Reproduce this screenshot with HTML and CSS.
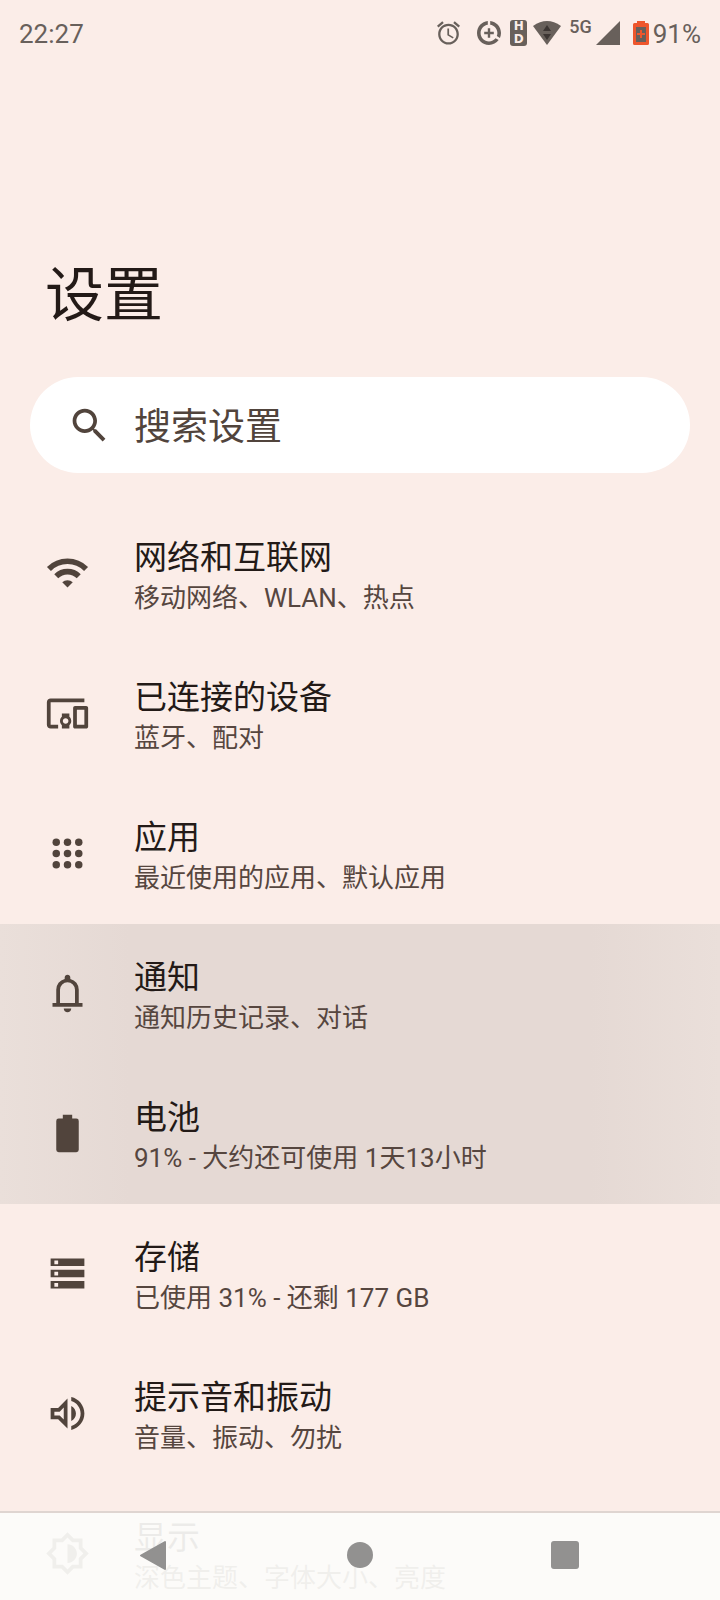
FILE: index.html
```html
<!DOCTYPE html>
<html lang="zh-CN">
<head>
<meta charset="utf-8">
<meta name="viewport" content="width=device-width, initial-scale=1">
<title>设置</title>
<link rel="stylesheet" href="styles.css">
</head>
<body>
<div class="screen">
  <header class="status">
    <time class="clock">22:27</time>
    <div class="indicators">
      <svg class="alarm" viewBox="2 2 20 20" aria-hidden="true"><path d="M22 5.72l-4.6-3.86-1.29 1.53 4.6 3.86L22 5.72zM7.88 3.39L6.6 1.86 2 5.71l1.29 1.53 4.59-3.85zM12.5 8H11v6l4.75 2.85.75-1.23-4-2.37V8zM12 4c-4.97 0-9 4.03-9 9s4.02 9 9 9c4.97 0 9-4.03 9-9s-4.03-9-9-9zm0 16c-3.87 0-7-3.13-7-7s3.13-7 7-7 7 3.13 7 7-3.13 7-7 7z"/></svg>
      <svg class="saver" viewBox="2 2 20 20" aria-hidden="true"><path d="M11 8v3H8v2h3v3h2v-3h3v-2h-3V8h-2zm2-5.95v3.03c3.39.49 6 3.39 6 6.92 0 .9-.18 1.75-.48 2.54l2.6 1.53c.56-1.24.88-2.62.88-4.07 0-5.18-3.95-9.45-9-9.95zM12 19c-3.87 0-7-3.13-7-7 0-3.53 2.61-6.43 6-6.92V2.05c-5.06.5-9 4.76-9 9.95 0 5.52 4.47 10 9.99 10 3.31 0 6.24-1.61 8.06-4.09l-2.6-1.53C16.17 17.98 14.21 19 12 19z"/></svg>
      <span class="hd"><span>H</span><span>D</span></span>
      <svg class="wifi" viewBox="0 0 28 24" aria-hidden="true"><path d="M14 24L0 5Q14-5 28 5z"/><path class="arrows" d="M14 4l4 6H10zM14 19l4-6H10z"/></svg>
      <span class="network">5G</span>
      <svg class="signal" viewBox="0 0 24 24" aria-hidden="true"><path d="M24 0v24H0z"/></svg>
      <svg class="charge" viewBox="0 0 16 24" aria-hidden="true"><path class="shell" d="M4 0h8v2h2.500q1.500 0 1.500 1.500v19q0 1.500-1.500 1.500h-13Q0 24 0 22.500v-19Q0 2 1.500 2H4z"/><path d="M3 6h10v15H3z"/><path class="shell" d="M7 9h2v3h3v2H9v3H7v-3H4v-2h3z"/></svg>
      <span class="percent">91%</span>
    </div>
  </header>

  <main>
    <h1 class="heading">设置</h1>
    <label class="search">
      <svg class="icon" viewBox="0 0 24 24" aria-hidden="true"><path d="M15.500 14h-.79l-.28-.27C15.410 12.590 16 11.110 16 9.500 16 5.910 13.090 3 9.500 3S3 5.910 3 9.500 5.910 16 9.500 16c1.610 0 3.090-.59 4.230-1.570l.27.28v.79l5 4.990L20.490 19l-4.990-5zm-6 0C7.010 14 5 11.990 5 9.500S7.010 5 9.500 5 14 7.010 14 9.500 11.990 14 9.500 14z"/></svg>
      <input class="search-field" type="text" placeholder="搜索设置" aria-label="搜索设置">
    </label>

    <nav class="list" aria-label="设置">
      <a class="row" href="#network">
        <svg class="icon" viewBox="0 0 24 24" aria-hidden="true"><path class="arc" d="M2.100 9.600A14 14 0 0 1 21.900 9.600M6 13.500A8.500 8.500 0 0 1 18 13.500"/><path d="M12 19.500L9.200 16.700A4 4 0 0 1 14.800 16.700z"/></svg>
        <span class="text"><span class="title">网络和互联网</span><span class="summary">移动网络、WLAN、热点</span></span>
      </a>
      <a class="row" href="#devices">
        <svg class="icon" viewBox="0 0 24 24" aria-hidden="true"><path d="M3 6h18V4H3c-1.100 0-2 .9-2 2v12c0 1.100.9 2 2 2h4v-2H3V6zm10 6H9v1.780c-.61.55-1 1.330-1 2.220s.39 1.670 1 2.220V20h4v-1.780c.61-.55 1-1.340 1-2.220s-.39-1.670-1-2.220V12zm-2 5.500c-.83 0-1.500-.67-1.500-1.500s.67-1.500 1.500-1.500 1.500.67 1.500 1.500-.67 1.500-1.500 1.500zM22 8h-6c-.5 0-1 .5-1 1v10c0 .5.5 1 1 1h6c.5 0 1-.5 1-1V9c0-.5-.5-1-1-1zm-1 10h-4v-8h4v8z"/></svg>
        <span class="text"><span class="title">已连接的设备</span><span class="summary">蓝牙、配对</span></span>
      </a>
      <a class="row" href="#apps">
        <svg class="icon" viewBox="0 0 24 24" aria-hidden="true"><circle cx="6" cy="6" r="2"/><circle cx="12" cy="6" r="2"/><circle cx="18" cy="6" r="2"/><circle cx="6" cy="12" r="2"/><circle cx="12" cy="12" r="2"/><circle cx="18" cy="12" r="2"/><circle cx="6" cy="18" r="2"/><circle cx="12" cy="18" r="2"/><circle cx="18" cy="18" r="2"/></svg>
        <span class="text"><span class="title">应用</span><span class="summary">最近使用的应用、默认应用</span></span>
      </a>
      <a class="row pressed" href="#notifications">
        <svg class="icon" viewBox="0 0 24 24" aria-hidden="true"><path d="M4 19v-2h2v-7q0-2.075 1.250-3.688T10.500 4.200v-.7q0-.625.438-1.062T12 2t1.063.438T13.500 3.500v.7q2 .5 3.250 2.112T18 10v7h2v2zm8 3q-.825 0-1.412-.587T10 20h4q0 .825-.587 1.413T12 22m-4-5h8v-7q0-1.650-1.175-2.825T12 6 9.175 7.175 8 10z"/></svg>
        <span class="text"><span class="title">通知</span><span class="summary">通知历史记录、对话</span></span>
      </a>
      <a class="row pressed" href="#battery">
        <svg class="icon" viewBox="0 0 24 24" aria-hidden="true"><path d="M9.500 2h5v2h2.200q1.300 0 1.300 1.300v15.400q0 1.300-1.300 1.300H7.300Q6 22 6 20.700V5.300Q6 4 7.300 4h2.200z"/></svg>
        <span class="text"><span class="title">电池</span><span class="summary">91% - 大约还可使用 1天13小时</span></span>
      </a>
      <a class="row" href="#storage">
        <svg class="icon" viewBox="0 0 24 24" aria-hidden="true"><path fill-rule="evenodd" d="M3 4h18v4H3zM5 5v2h2V5zM3 10h18v4H3zM5 11v2h2v-2zM3 16h18v4H3zM5 17v2h2v-2z"/></svg>
        <span class="text"><span class="title">存储</span><span class="summary">已使用 31% - 还剩 177 GB</span></span>
      </a>
      <a class="row" href="#sound">
        <svg class="icon" viewBox="0 0 24 24" aria-hidden="true"><path d="M3 9v6h4l5 5V4L7 9H3zm7-.17v6.340L7.830 13H5v-2h2.830L10 8.830zM16.500 12c0-1.770-1.020-3.290-2.500-4.030v8.050c1.480-.73 2.500-2.250 2.500-4.020zM14 3.230v2.060c2.890.86 5 3.540 5 6.710s-2.110 5.850-5 6.710v2.060c4.010-.91 7-4.490 7-8.770 0-4.280-2.990-7.860-7-8.770z"/></svg>
        <span class="text"><span class="title">提示音和振动</span><span class="summary">音量、振动、勿扰</span></span>
      </a>
      <a class="row" href="#display">
        <svg class="icon" viewBox="0 0 24 24" aria-hidden="true"><path d="M20 15.310L23.310 12 20 8.690V4h-4.690L12 .69 8.690 4H4v4.690L.69 12 4 15.310V20h4.690L12 23.310 15.310 20H20v-4.690zm-2-.85V18h-3.540L12 20.490 9.510 18H6v-3.510L3.510 12 6 9.490V6h3.510L12 3.510 14.490 6H18v3.510L20.490 12 18 14.460zM12 7v10c2.760 0 5-2.240 5-5s-2.240-5-5-5z"/></svg>
        <span class="text"><span class="title">显示</span><span class="summary">深色主题、字体大小、亮度</span></span>
      </a>
    </nav>
  </main>

  <footer class="system-nav">
    <button class="key" type="button" aria-label="返回"><svg viewBox="0 0 48 48" aria-hidden="true"><path class="back" d="M33 9v27L9 22.500z"/></svg></button>
    <button class="key" type="button" aria-label="主屏幕"><svg viewBox="0 0 48 48" aria-hidden="true"><circle cx="24" cy="22" r="13"/></svg></button>
    <button class="key" type="button" aria-label="最近任务"><svg viewBox="0 0 48 48" aria-hidden="true"><rect x="11" y="8" width="28" height="28" rx="3"/></svg></button>
  </footer>
</div>
</body>
</html>
```

FILE: styles.css
```css
* { box-sizing: border-box; }

body {
  margin: 0;
  background: #fbede8;
  color: #231a17;
  font-family: Roboto, "Noto Sans CJK SC", sans-serif;
}

.screen {
  height: 100vh;
  overflow: hidden;
}

svg {
  display: block;
  fill: currentColor;
}

.status {
  display: flex;
  justify-content: space-between;
  align-items: center;
  height: 66px;
  padding: 0 19px;
  color: #68605b;
  font-size: 26px;
  line-height: 32px;
}

.clock,
.percent { padding-top: 2px; }

.indicators {
  display: flex;
  align-items: center;
}

.alarm { width: 23px; height: 24px; }
.saver { width: 24px; height: 24px; margin-left: 17px; }

.hd {
  display: flex;
  flex-direction: column;
  align-items: center;
  width: 17px;
  height: 26px;
  margin-left: 9px;
  border-radius: 3px;
  background: #68605b;
  color: #fbede8;
  font-family: "DejaVu Sans", sans-serif;
  font-size: 12px;
  font-weight: 700;
  line-height: 13px;
}

.wifi { width: 28px; height: 24px; margin-left: 6px; }
.arrows { fill: #3c3533; }

.network {
  align-self: flex-start;
  margin-left: 8px;
  padding-top: 1px;
  font-size: 18px;
  font-weight: 500;
  line-height: 20px;
}

.signal { width: 24px; height: 24px; margin-left: 4px; }
.charge { width: 16px; height: 24px; margin-left: 13px; }
.shell { fill: #ee562c; }
.percent { margin-left: 4px; }

.heading {
  margin: 0;
  padding: 190px 45px 41px;
  font-size: 59px;
  font-weight: 400;
  line-height: 80px;
}

.search {
  display: flex;
  align-items: center;
  gap: 22px;
  height: 96px;
  margin: 0 30px;
  padding: 0 37px;
  border-radius: 48px;
  background: #fff;
  color: #51443c;
}

.search-field {
  flex: 1;
  min-width: 0;
  padding: 4px 0 0;
  border: 0;
  outline: 0;
  background: none;
  color: inherit;
  font: inherit;
  font-size: 37px;
}

.search-field::placeholder {
  color: inherit;
  opacity: 1;
}

.list { margin-top: 31px; }

.row {
  display: flex;
  align-items: center;
  gap: 44px;
  height: 140px;
  padding: 0 45px 2px;
  color: inherit;
  text-decoration: none;
}

.pressed {
  background: linear-gradient(90deg, #eadfda, #e5d9d4 18%, #e5d9d4 82%, #eadfda);
}

.icon {
  flex: none;
  width: 45px;
  height: 45px;
  color: #51443c;
}

.arc {
  fill: none;
  stroke: currentColor;
  stroke-width: 3;
}

.text {
  display: flex;
  flex-direction: column;
  padding-top: 6px;
}

.title {
  font-size: 33px;
  line-height: 44px;
}

.summary {
  color: #56463f;
  font-size: 26px;
  line-height: 36px;
}

.system-nav {
  position: fixed;
  right: 0;
  bottom: 0;
  left: 0;
  display: flex;
  justify-content: center;
  height: 89px;
  border-top: 2px solid #dfd5d1;
  background: rgba(252, 252, 250, 0.93);
}

.key {
  display: grid;
  place-items: center;
  width: 204px;
  padding: 0;
  border: 0;
  background: none;
  color: #929190;
}

.key svg {
  width: 48px;
  height: 48px;
}

.back {
  stroke: currentColor;
  stroke-width: 2;
  stroke-linejoin: round;
}
```
